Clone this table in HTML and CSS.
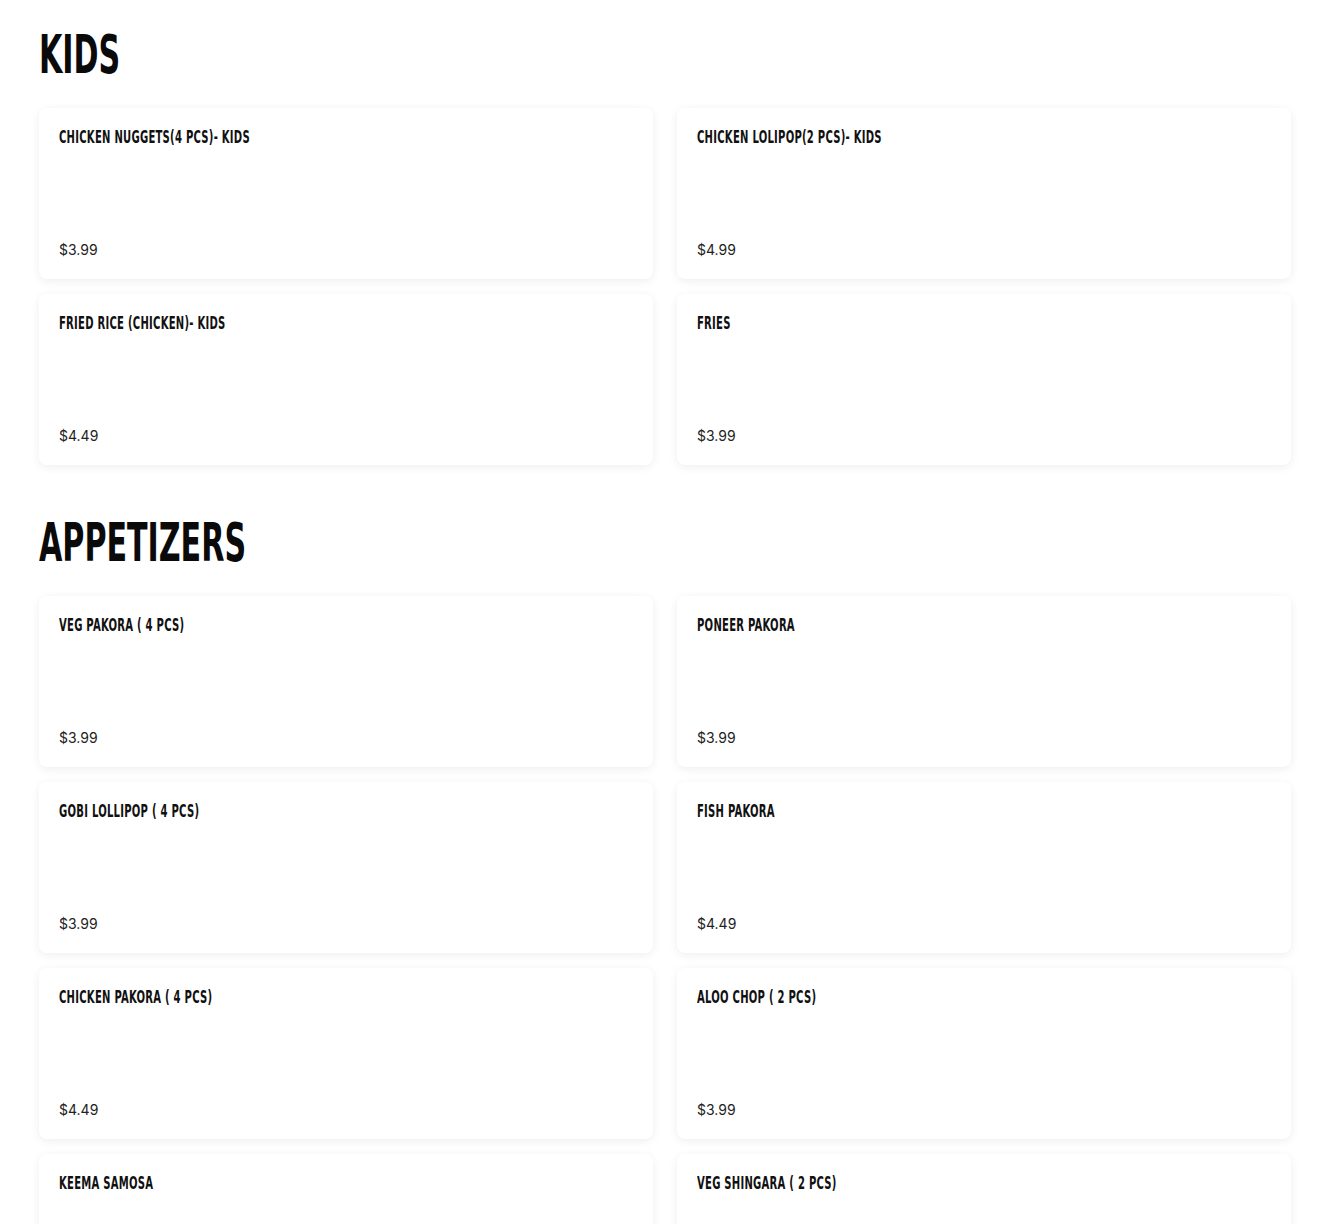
FILE: index.html
```html
<!DOCTYPE html>
<html lang="en">
<head>
<meta charset="utf-8">
<title>Menu</title>
<link rel="stylesheet" href="styles.css">
</head>
<body>
<main class="menu">
  <section class="category">
    <h2 class="category-title"><span class="squeeze">KIDS</span></h2>
    <div class="grid">
      <article class="item"><h3 class="item-name"><span class="squeeze">CHICKEN NUGGETS(4 PCS)- KIDS</span></h3><p class="item-price">$3.99</p></article>
      <article class="item"><h3 class="item-name"><span class="squeeze">CHICKEN LOLIPOP(2 PCS)- KIDS</span></h3><p class="item-price">$4.99</p></article>
      <article class="item"><h3 class="item-name"><span class="squeeze">FRIED RICE (CHICKEN)- KIDS</span></h3><p class="item-price">$4.49</p></article>
      <article class="item"><h3 class="item-name"><span class="squeeze">FRIES</span></h3><p class="item-price">$3.99</p></article>
    </div>
  </section>
  <section class="category">
    <h2 class="category-title"><span class="squeeze">APPETIZERS</span></h2>
    <div class="grid">
      <article class="item"><h3 class="item-name"><span class="squeeze">VEG PAKORA ( 4 PCS)</span></h3><p class="item-price">$3.99</p></article>
      <article class="item"><h3 class="item-name"><span class="squeeze">PONEER PAKORA</span></h3><p class="item-price">$3.99</p></article>
      <article class="item"><h3 class="item-name"><span class="squeeze">GOBI LOLLIPOP ( 4 PCS)</span></h3><p class="item-price">$3.99</p></article>
      <article class="item"><h3 class="item-name"><span class="squeeze">FISH PAKORA</span></h3><p class="item-price">$4.49</p></article>
      <article class="item"><h3 class="item-name"><span class="squeeze">CHICKEN PAKORA ( 4 PCS)</span></h3><p class="item-price">$4.49</p></article>
      <article class="item"><h3 class="item-name"><span class="squeeze">ALOO CHOP ( 2 PCS)</span></h3><p class="item-price">$3.99</p></article>
      <article class="item"><h3 class="item-name"><span class="squeeze">KEEMA SAMOSA</span></h3><p class="item-price">$3.99</p></article>
      <article class="item"><h3 class="item-name"><span class="squeeze">VEG SHINGARA ( 2 PCS)</span></h3><p class="item-price">$3.99</p></article>
    </div>
  </section>
</main>
</body>
</html>
```
FILE: styles.css
```css
* { box-sizing: border-box; }
html, body { margin: 0; padding: 0; background: #fff; }
body { color: #111; font-family: "Inter", "Liberation Sans", sans-serif; }
.menu { padding: 28px 39px 40px; }
.category { margin-bottom: 51px; }
.category-title {
  margin: 0 0 26px;
  font-family: "DejaVu Sans Condensed", "DejaVu Sans", sans-serif;
  font-stretch: condensed;
  font-weight: 700;
  font-size: 54px;
  line-height: 54px;
  color: #0a0a0a;
  white-space: nowrap;
}
.category-title .squeeze { display: inline-block; transform: scaleX(0.62); transform-origin: left center; }
.grid {
  display: grid;
  grid-template-columns: 1fr 1fr;
  column-gap: 24px;
  row-gap: 15px;
}
.item {
  background: #fff;
  border-radius: 8px;
  box-shadow: 0 2px 10px rgba(0, 0, 0, 0.07);
  padding: 20px 20px 20px;
  min-height: 171px;
  display: flex;
  flex-direction: column;
  justify-content: space-between;
}
.item-name {
  margin: 0;
  font-family: "DejaVu Sans Condensed", "DejaVu Sans", sans-serif;
  font-stretch: condensed;
  font-weight: 700;
  font-size: 18px;
  line-height: 18px;
  color: #111;
  white-space: nowrap;
}
.item-name .squeeze { display: inline-block; transform: scaleX(0.62); transform-origin: left center; letter-spacing: 0.4px; }
.item-price {
  margin: 0;
  font-size: 14px;
  line-height: 18px;
  color: #222;
}
```
